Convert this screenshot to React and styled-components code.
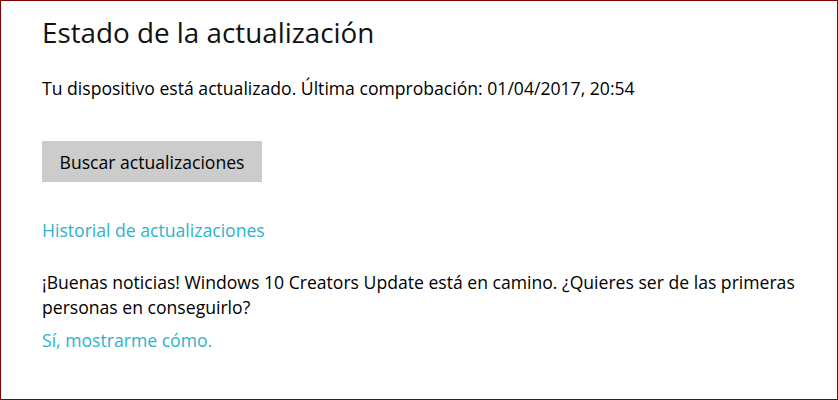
import React from 'react'
import styled, { createGlobalStyle } from 'styled-components'

const GlobalStyles = createGlobalStyle`
    html, body {
        margin: 0;
        padding: 0;
        background: #ffffff;
    }
`

// CONTAINERS
const Window = styled.div`
    box-sizing: border-box;
    width: 838px;
    height: 400px;
    border: 1px solid #7f0000;
    background: #ffffff;
    padding: 13px 0 0 41px;
    font-family: "Open Sans", "Noto Sans", sans-serif;
    color: #000000;
    display: flex;
    flex-direction: column;
    align-items: flex-start;
`

// TEXT
const Title = styled.h1`
    margin: 0;
    font-size: 27.8px;
    font-weight: 400;
    line-height: 36px;
    color: #111111;
`
const Status = styled.p`
    margin: 27px 0 0 0;
    font-size: 17.6px;
    line-height: 22px;
`
const Paragraph = styled.p`
    margin: 29px 0 0 0;
    width: 775px;
    font-size: 17.6px;
    line-height: 25px;
`

// CONTROLS
const Button = styled.button`
    margin-top: 42px;
    width: 220px;
    height: 41px;
    border: none;
    background: #cccccc;
    font-family: inherit;
    font-size: 17.6px;
    color: #000000;
    padding: 0;
    cursor: pointer;
`
const Link = styled.a`
    display: block;
    margin-top: ${p => p.gap}px;
    font-size: 17.6px;
    line-height: 22px;
    color: #2bb3cf;
    text-decoration: none;
    cursor: pointer;
`

const App = () => {
    return (
        <>
            <GlobalStyles />
            <Window>
                <Title>Estado de la actualización</Title>
                <Status>Tu dispositivo está actualizado. Última comprobación: 01/04/2017, 20:54</Status>
                <Button>Buscar actualizaciones</Button>
                <Link gap={37}>Historial de actualizaciones</Link>
                <Paragraph>
                    ¡Buenas noticias! Windows 10 Creators Update está en camino. ¿Quieres ser de las primeras personas en conseguirlo?
                </Paragraph>
                <Link gap={9}>Sí, mostrarme cómo.</Link>
            </Window>
        </>
    )
}

export default App
